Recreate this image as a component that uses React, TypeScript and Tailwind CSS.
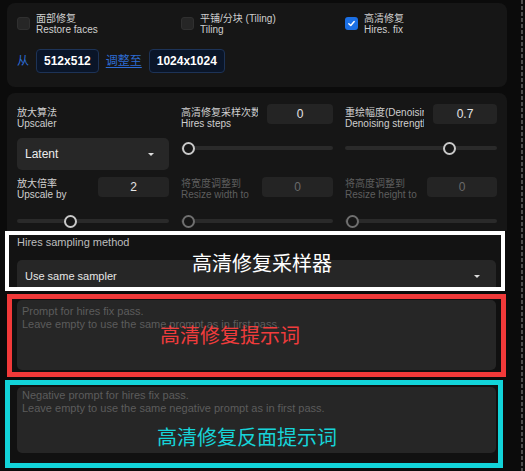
import React from 'react';

type LabelProps = { zh: string; en: string; dim?: boolean; className?: string };

const Label: React.FC<LabelProps> = ({ zh, en, dim, className = '' }) => (
  <div
    className={`text-[10px] leading-[11px] whitespace-nowrap overflow-hidden ${dim ? 'text-[#5e5e5e]' : 'text-[#cfcfcf]'} ${className}`}
  >
    <div>{zh}</div>
    <div>{en}</div>
  </div>
);

const NumBox: React.FC<{ v: string; dim?: boolean; className?: string }> = ({ v, dim, className = '' }) => (
  <div
    className={`h-[20px] shrink-0 rounded-[4px] bg-[#242424] flex items-center justify-center text-[12px] ${dim ? 'text-[#6a6a6a]' : 'text-[#e4e4e4]'} ${className}`}
  >
    {v}
  </div>
);

// pos = thumb centre in px from the start of the track
const Slider: React.FC<{ pos: number; dim?: boolean }> = ({ pos, dim }) => (
  <div className="relative h-[20px] flex items-center">
    <div className="h-[4px] w-full rounded-full bg-[#2a2a2a]" />
    <div
      className={`absolute top-[3.5px] w-[13px] h-[13px] rounded-full border-2 bg-[#161616] ${dim ? 'border-[#6f6f6f]' : 'border-[#c9c9c9]'}`}
      style={{ left: pos - 6.5 }}
    />
  </div>
);

const Caret = () => (
  <div className="w-0 h-0 border-l-[3px] border-r-[3px] border-t-[3px] border-l-transparent border-r-transparent border-t-[#dcdcdc]" />
);

const Check: React.FC<{ on?: boolean; zh: string; en: string }> = ({ on, zh, en }) => (
  <div className="flex items-start gap-[6px]">
    {on ? (
      <div className="mt-[4px] w-[13px] h-[13px] shrink-0 rounded-[3px] bg-[#1b6fe4] flex items-center justify-center">
        <svg width="9" height="9" viewBox="0 0 10 10">
          <polyline points="2,5.2 4.2,7.3 8,2.8" fill="none" stroke="white" strokeWidth="1.6" strokeLinecap="round" strokeLinejoin="round" />
        </svg>
      </div>
    ) : (
      <div className="mt-[4px] w-[13px] h-[13px] shrink-0 rounded-[3px] bg-[#262626] border border-[#303030]" />
    )}
    <Label zh={zh} en={en} />
  </div>
);

export default function App() {
  return (
    <div className="flex w-[525px] h-[471px] overflow-hidden bg-[#0b0b0b] font-['Liberation_Sans','Noto_Sans_CJK_SC',sans-serif]">
      <div className="w-[521px] shrink-0">
        {/* top options */}
        <div className="mt-[3px] ml-[7px] w-[500px] h-[84px] rounded-[8px] bg-[#161616] px-[10px] pt-[10px]">
          <div className="grid grid-cols-[152px_152px_152px] gap-x-[12px]">
            <Check zh="面部修复" en="Restore faces" />
            <Check zh="平铺/分块 (Tiling)" en="Tiling" />
            <Check on zh="高清修复" en="Hires. fix" />
          </div>
          <div className="mt-[14px] flex items-center h-[24px] text-[12px]">
            <span className="text-[#2d6cd4]">从</span>
            <div className="ml-[7px] h-[24px] px-[7px] rounded-[4px] border border-[#1d3357] bg-[#0a1528] text-white font-bold flex items-center">
              512x512
            </div>
            <span className="ml-[7px] text-[#2d6cd4] underline underline-offset-2">调整至</span>
            <div className="ml-[7px] h-[24px] px-[7px] rounded-[4px] border border-[#1d3357] bg-[#0a1528] text-white font-bold flex items-center">
              1024x1024
            </div>
          </div>
        </div>

        {/* hires settings */}
        <div className="mt-[6px] ml-[7px] w-[500px] h-[138px] rounded-t-[8px] bg-[#161616] px-[10px] pt-[11px]">
          <div className="h-[20px] grid grid-cols-[152px_152px_152px] gap-x-[12px] items-start">
            <Label zh="放大算法" en="Upscaler" className="mt-[3px]" />
            <div className="flex items-start">
              <Label zh="高清修复采样次数" en="Hires steps" className="w-[77px] mt-[3px]" />
              <NumBox v="0" className="ml-[9px] w-[66px]" />
            </div>
            <div className="flex items-start">
              <Label zh="重绘幅度(Denoising strength)" en="Denoising strength" className="w-[79px] mt-[3px]" />
              <NumBox v="0.7" className="ml-[9px] w-[64px]" />
            </div>
          </div>

          <div className="mt-[14px] h-[32px] grid grid-cols-[152px_152px_152px] gap-x-[12px] items-start">
            <div className="h-[32px] rounded-[5px] bg-[#272727] flex items-center justify-between pl-[8px] pr-[15px] text-[12px] text-[#ececec]">
              <span>Latent</span>
              <Caret />
            </div>
            <Slider pos={7} />
            <Slider pos={104.7} />
          </div>

          <div className="mt-[7px] h-[20px] grid grid-cols-[152px_152px_152px] gap-x-[12px] items-start">
            <div className="flex items-start">
              <Label zh="放大倍率" en="Upscale by" className="w-[72px] mt-[1px]" />
              <NumBox v="2" className="ml-auto w-[71px]" />
            </div>
            <div className="flex items-start">
              <Label dim zh="将宽度调整到" en="Resize width to" className="w-[72px] mt-[1px]" />
              <NumBox dim v="0" className="ml-auto w-[71px]" />
            </div>
            <div className="flex items-start">
              <Label dim zh="将高度调整到" en="Resize height to" className="w-[74px] mt-[1px]" />
              <NumBox dim v="0" className="ml-auto w-[70px]" />
            </div>
          </div>

          <div className="mt-[14px] grid grid-cols-[152px_152px_152px] gap-x-[12px]">
            <Slider pos={53} />
            <Slider dim pos={7} />
            <Slider dim pos={7} />
          </div>
        </div>

        {/* sampler (white) */}
        <div className="relative ml-[5px] w-[500px] h-[60px] border-4 border-white bg-[#131313] overflow-hidden pl-[8px] pt-[1px]">
          <div className="text-[11px] leading-[12px] text-[#bdbdbd]">Hires sampling method</div>
          <div className="mt-[12px] w-[479px] h-[32px] rounded-[5px] bg-[#262626] flex items-center justify-between pl-[8px] pr-[16px] text-[11px] text-[#e6e6e6]">
            <span>Use same sampler</span>
            <Caret />
          </div>
          <div className="absolute left-[183px] top-[19px] text-[20px] leading-[20px] text-white whitespace-nowrap">
            高清修复采样器
          </div>
        </div>

        {/* prompt (red) */}
        <div className="relative mt-[3px] ml-[7px] w-[499px] h-[83px] border-[5px] border-[#f13939] bg-[#101010] pl-[5px] pt-[1px]">
          <div className="w-[479px] h-[70px] rounded-[5px] bg-[#262626] px-[5px] pt-[5px] text-[11px] leading-[13px] text-[#5c5c5c]">
            <div>Prompt for hires fix pass.</div>
            <div>Leave empty to use the same prompt as in first pass.</div>
          </div>
          <div className="absolute left-[148px] top-[27px] text-[20px] leading-[20px] text-[#f03c3c] whitespace-nowrap">
            高清修复提示词
          </div>
        </div>

        {/* negative prompt (cyan) */}
        <div className="relative mt-[3px] ml-[5px] w-[498px] h-[88px] border-[5px] border-[#12d4d9] bg-[#111111] pl-[7px] pt-[2px]">
          <div className="w-[479px] h-[66px] rounded-[5px] bg-[#262626] px-[5px] pt-[2px] text-[11px] leading-[13px] text-[#5c5c5c]">
            <div>Negative prompt for hires fix pass.</div>
            <div>Leave empty to use the same negative prompt as in first pass.</div>
          </div>
          <div className="absolute left-[147px] top-[43px] text-[20px] leading-[20px] text-[#17d3d8] whitespace-nowrap">
            高清修复反面提示词
          </div>
        </div>
      </div>

      <div className="w-[2px] h-full bg-[repeating-linear-gradient(to_bottom,#4d4d4d_0_4px,transparent_4px_6px)]" />
    </div>
  );
}
